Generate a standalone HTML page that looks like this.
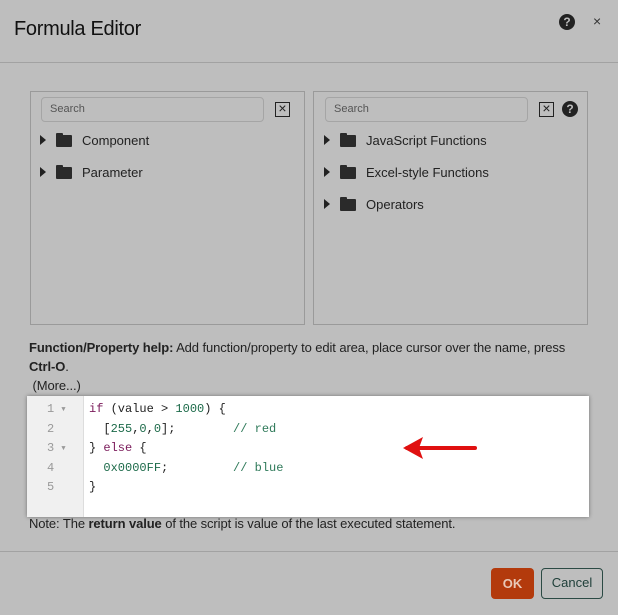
<!DOCTYPE html><html><head><style>
body{margin:0;width:618px;height:615px;background:#bebebe;font-family:"Liberation Sans",sans-serif;position:relative;overflow:hidden;color:#222}
.a{position:absolute}
.panel{border:1px solid #9a9a9a;box-sizing:border-box}
.search{border:1px solid #a5a5a5;border-radius:4px;box-sizing:border-box;font-size:11px;color:#555;padding:5px 8px}
.xb{width:15px;height:15px;border:1.5px solid #222;box-sizing:border-box;font-size:14px;line-height:11px;text-align:center}
.row{font-size:13px;color:#222}
.tri{width:0;height:0;border-left:6px solid #222;border-top:5px solid transparent;border-bottom:5px solid transparent}
.fold{width:16px;height:12px;background:#2a2a2a;border-radius:1px}
.fold:before{content:"";position:absolute;left:0;top:-2px;width:7px;height:3px;background:#2a2a2a;border-radius:1px 1px 0 0}
.q{width:16px;height:16px;border-radius:50%;background:#222;color:#bebebe;font-weight:bold;font-size:12px;text-align:center;line-height:16px}
.code{font-family:"Liberation Mono",monospace;font-size:12px;white-space:pre;line-height:19.6px}
.ln{font-family:"Liberation Mono",monospace;font-size:12px;color:#999;line-height:19.6px;white-space:pre}
.ln span{font-size:7px;line-height:1;vertical-align:1px}
</style></head><body>
<div class="a" style="left:14px;top:18px;font-size:20px;color:#111;letter-spacing:-0.3px">Formula Editor</div>
<div class="a q" style="left:559px;top:14px">?</div>
<div class="a" style="left:593px;top:13px;font-size:14px;color:#333">×</div>
<div class="a" style="left:0;top:62px;width:618px;height:1px;background:#a2a2a2"></div>

<div class="a panel" style="left:30px;top:91px;width:275px;height:234px"></div>
<div class="a panel" style="left:313px;top:91px;width:275px;height:234px"></div>
<div class="a search" style="left:41px;top:97px;width:223px;height:25px">Search</div>
<div class="a xb" style="left:275px;top:102px">×</div>
<div class="a search" style="left:325px;top:97px;width:203px;height:25px">Search</div>
<div class="a xb" style="left:539px;top:102px">×</div>
<div class="a q" style="left:562px;top:101px">?</div>

<div class="a tri" style="left:40px;top:135px"></div><div class="a fold" style="left:56px;top:135px"></div><div class="a row" style="left:82px;top:133px">Component</div>
<div class="a tri" style="left:40px;top:167px"></div><div class="a fold" style="left:56px;top:167px"></div><div class="a row" style="left:82px;top:165px">Parameter</div>
<div class="a tri" style="left:324px;top:135px"></div><div class="a fold" style="left:340px;top:135px"></div><div class="a row" style="left:366px;top:133px">JavaScript Functions</div>
<div class="a tri" style="left:324px;top:167px"></div><div class="a fold" style="left:340px;top:167px"></div><div class="a row" style="left:366px;top:165px">Excel-style Functions</div>
<div class="a tri" style="left:324px;top:199px"></div><div class="a fold" style="left:340px;top:199px"></div><div class="a row" style="left:366px;top:197px">Operators</div>

<div class="a" style="left:29px;top:338px;font-size:13px;line-height:19px;white-space:nowrap;color:#222;letter-spacing:-0.1px"><b>Function/Property help:</b> Add function/property to edit area, place cursor over the name, press<br><b>Ctrl-O</b>.<br>&nbsp;(More...)</div>

<div class="a" style="left:27px;top:396px;width:562px;height:121px;background:#fff;box-shadow:0 0 4px rgba(0,0,0,.4)">
<div class="a" style="left:0;top:0;width:56px;height:121px;background:#f0f0f0;border-right:1px solid #ddd"></div>
<div class="a ln" style="left:20px;top:4px">1 <span>▼</span>
2
3 <span>▼</span>
4
5</div>
<div class="a code" style="left:62px;top:4px;color:#222"><span style="color:#7a1a5a">if</span> (value &gt; <span style="color:#1d6b4a">1000</span>) {
  [<span style="color:#1d6b4a">255</span>,<span style="color:#1d6b4a">0</span>,<span style="color:#1d6b4a">0</span>];        <span style="color:#2f7a5a">// red</span>
} <span style="color:#7a1a5a">else</span> {
  <span style="color:#1d6b4a">0x0000FF</span>;         <span style="color:#2f7a5a">// blue</span>
}</div>
<svg class="a" style="left:372px;top:38px" width="80" height="30"><path d="M8 14 H76" stroke="#e01010" stroke-width="4" stroke-linecap="round"/><path d="M4 14 L24 3 L20 14 L24 25 Z" fill="#e01010"/></svg>
</div>

<div class="a" style="left:29px;top:516px;font-size:13px;color:#222;letter-spacing:-0.1px">Note: The <b>return value</b> of the script is value of the last executed statement.</div>
<div class="a" style="left:0;top:551px;width:618px;height:1px;background:#a2a2a2"></div>
<div class="a" style="left:491px;top:568px;width:43px;height:31px;background:#b33a0c;border-radius:4px;color:#e9c9b8;font-size:13px;font-weight:bold;text-align:center;line-height:31px">OK</div>
<div class="a" style="left:541px;top:568px;width:62px;height:31px;border:1.5px solid #2b4a44;box-sizing:border-box;border-radius:4px;color:#1e3e38;font-size:13px;text-align:center;line-height:28px">Cancel</div>
</body></html>
